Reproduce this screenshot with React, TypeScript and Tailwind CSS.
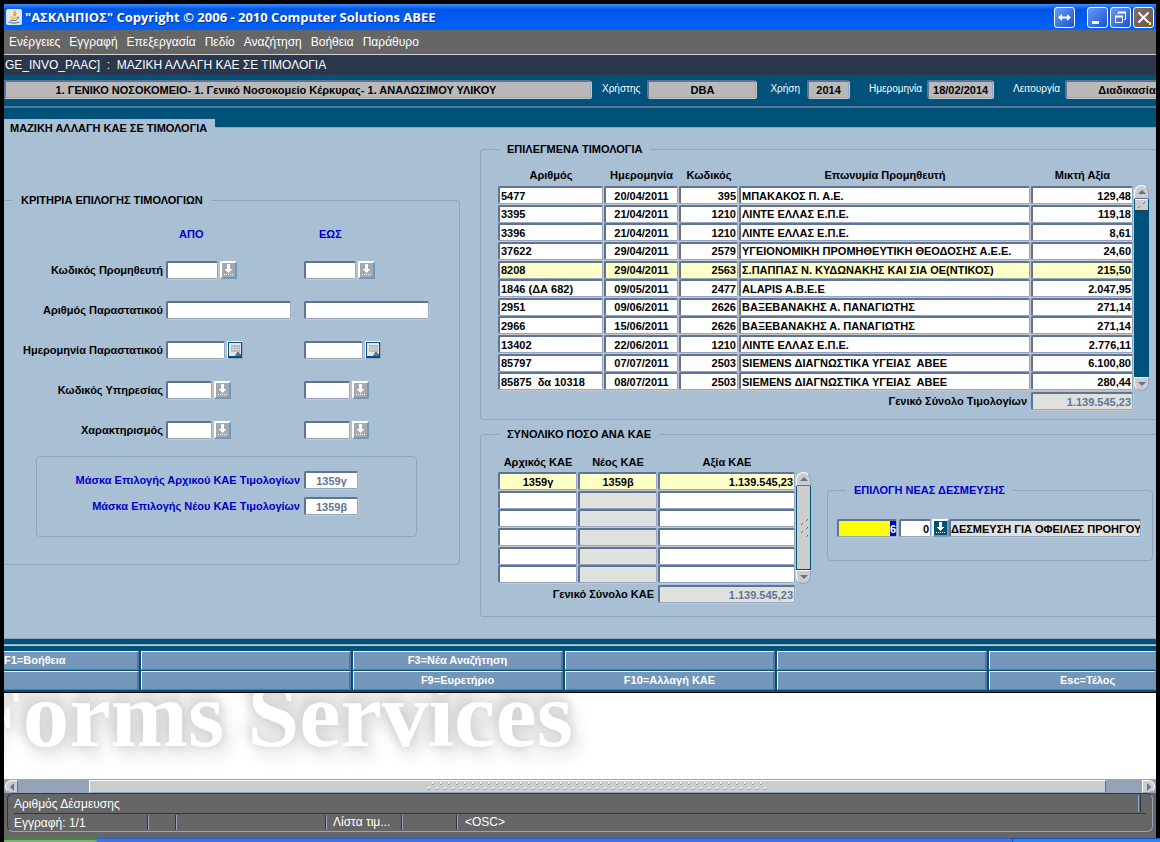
import { useState } from "react";
import type { ReactNode } from "react";

const bevel =
  "rounded-[2px] border-t-2 border-l-2 border-r border-b border-t-[#5f7396] border-l-[#5f7396] border-r-[#94a5bd] border-b-[#94a5bd] shadow-[1px_1px_0_#c8c8c8] outline-none";

type FieldProps = {
  label: string;
  value?: string;
  className?: string;
  readOnly?: boolean;
  id?: string;
};

function Field({ label, value = "", className = "", readOnly, id }: FieldProps) {
  const [text, setText] = useState(value);
  return (
    <input
      id={id}
      type="text"
      aria-label={id ? undefined : label}
      value={text}
      readOnly={readOnly}
      onChange={(e) => setText(e.target.value)}
      className={`block min-w-0 text-[11px] ${bevel} ${className}`}
    />
  );
}

function ListButton({ label, active = false }: { label: string; active?: boolean }) {
  return (
    <button
      type="button"
      aria-label={label}
      className={`h-[18px] w-[17px] shrink-0 border-2 border-t-white border-l-white border-r-[#7496b9] border-b-[#7496b9] ${
        active ? "bg-[#00527a]" : "bg-[#a3a9b0]"
      }`}
    >
      <svg viewBox="0 0 13 14" className="block h-[14px] w-[13px]" shapeRendering="crispEdges">
        <path d="M5 1h3v5h2v1h-1v1h-1v1h-1v1h-1v-1h-1v-1h-1v-1h-1v-1h2z" fill="#fff" />
        <path d="M2 11.5h9" stroke="#fff" strokeWidth="1" strokeDasharray="1 1" />
      </svg>
    </button>
  );
}

function CalendarButton({ label }: { label: string }) {
  return (
    <button
      type="button"
      aria-label={label}
      className="h-[18px] w-[16px] shrink-0 border border-t-white border-l-white border-r-[#94a5bd] border-b-[#94a5bd]"
    >
      <svg viewBox="0 0 14 16" className="block h-[16px] w-[14px]" shapeRendering="crispEdges">
        <path d="M0 0h14v16h-14z" fill="#00527a" />
        <path d="M1 1h12v13h-12z" fill="#e4e6e5" />
        <path d="M3 3h9v7h-9z" fill="#b9bcbc" />
        <path d="M4 5.500h7M4 7.500h7" stroke="#dcdedd" strokeDasharray="2 1" />
        <path d="M9 10h2v1h1v1h1v2h-6v-1h1v-2h1z" fill="#5f7396" />
      </svg>
    </button>
  );
}

function VerticalScroll({ full = false, className = "" }: { full?: boolean; className?: string }) {
  return (
    <div className={`flex w-[15px] flex-col ${className}`}>
      <button
        type="button"
        aria-label="Κύλιση επάνω"
        className="flex h-[14px] items-center justify-center rounded-t-full border border-b-[#5f7396] border-t-white border-l-white border-r-[#94a5bd] bg-[#cdcdcd]"
      >
        <svg viewBox="0 0 8 4" className="h-[4px] w-[8px]">
          <path d="M0 4L4 0L8 4z" fill="#5f7396" />
        </svg>
      </button>
      <div className="flex min-h-0 flex-1 flex-col bg-[#00527a]">
        <div
          className={`mx-px flex items-center justify-center border-b border-[#2a374d] bg-[#cdcdcd] ${
            full ? "flex-1" : "h-[12px] border-t border-t-white"
          }`}
        >
          <svg viewBox="0 0 8 20" className={full ? "h-[20px] w-[8px]" : "hidden"}>
            <path d="M6 3l2-2M1 7l2-2M6 11l2-2M1 15l2-2M6 19l2-2" stroke="#5f7396" />
          </svg>
          <svg viewBox="0 0 8 8" className={full ? "hidden" : "h-[8px] w-[8px]"}>
            <path d="M0 7l2-2M5 3l2-2" stroke="#5f7396" />
          </svg>
        </div>
      </div>
      <button
        type="button"
        aria-label="Κύλιση κάτω"
        className="flex h-[14px] items-center justify-center rounded-b-full border border-t-white border-b-[#94a5bd] border-l-white border-r-[#94a5bd] bg-[#cdcdcd]"
      >
        <svg viewBox="0 0 8 4" className="h-[4px] w-[8px]">
          <path d="M0 0L4 4L8 0z" fill="#5f7396" />
        </svg>
      </button>
    </div>
  );
}

function WindowButton({ label, tone, children }: { label: string; tone: string; children: ReactNode }) {
  return (
    <button
      type="button"
      aria-label={label}
      className={`flex size-[21px] items-center justify-center rounded-[3px] border border-white ${tone}`}
    >
      <svg viewBox="0 0 17 17" className="size-[17px]" fill="none" stroke="#fff">
        {children}
      </svg>
    </button>
  );
}

const menus = ["Ενέργειες", "Εγγραφή", "Επεξεργασία", "Πεδίο", "Αναζήτηση", "Βοήθεια", "Παράθυρο"];

const invoices = [
  ["5477", "20/04/2011", "395", "ΜΠΑΚΑΚΟΣ Π. Α.Ε.", "129,48"],
  ["3395", "21/04/2011", "1210", "ΛΙΝΤΕ ΕΛΛΑΣ Ε.Π.Ε.", "119,18"],
  ["3396", "21/04/2011", "1210", "ΛΙΝΤΕ ΕΛΛΑΣ Ε.Π.Ε.", "8,61"],
  ["37622", "29/04/2011", "2579", "ΥΓΕΙΟΝΟΜΙΚΗ ΠΡΟΜΗΘΕΥΤΙΚΗ ΘΕΟΔΟΣΗΣ Α.Ε.Ε.", "24,60"],
  ["8208", "29/04/2011", "2563", "Σ.ΠΑΠΠΑΣ Ν. ΚΥΔΩΝΑΚΗΣ ΚΑΙ ΣΙΑ ΟΕ(ΝΤΙΚΟΣ)", "215,50"],
  ["1846 (ΔΑ 682)", "09/05/2011", "2477", "ALAPIS A.B.E.E", "2.047,95"],
  ["2951", "09/06/2011", "2626", "ΒΑΞΕΒΑΝΑΚΗΣ Α. ΠΑΝΑΓΙΩΤΗΣ", "271,14"],
  ["2966", "15/06/2011", "2626", "ΒΑΞΕΒΑΝΑΚΗΣ Α. ΠΑΝΑΓΙΩΤΗΣ", "271,14"],
  ["13402", "22/06/2011", "1210", "ΛΙΝΤΕ ΕΛΛΑΣ Ε.Π.Ε.", "2.776,11"],
  ["85797", "07/07/2011", "2503", "SIEMENS ΔΙΑΓΝΩΣΤΙΚΑ ΥΓΕΙΑΣ  ΑΒΕΕ", "6.100,80"],
  ["85875  δα 10318", "08/07/2011", "2503", "SIEMENS ΔΙΑΓΝΩΣΤΙΚΑ ΥΓΕΙΑΣ  ΑΒΕΕ", "280,44"],
];
const invoiceHeads = ["Αριθμός", "Ημερομηνία", "Κωδικός", "Επωνυμία Προμηθευτή", "Μικτή Αξία"];
const invoiceAlign = ["text-left", "text-center", "text-right", "text-left", "text-right"];

const kaeRows = [
  ["1359γ", "1359β", "1.139.545,23"],
  ["", "", ""],
  ["", "", ""],
  ["", "", ""],
  ["", "", ""],
  ["", "", ""],
];
const kaeHeads = ["Αρχικός ΚΑΕ", "Νέος ΚΑΕ", "Αξία ΚΑΕ"];
const kaeAlign = ["text-center", "text-center", "text-right"];

const criteria = [
  { label: "Κωδικός Προμηθευτή", width: "w-[52px]", kind: "list" },
  { label: "Αριθμός Παραστατικού", width: "w-[125px]", kind: "none" },
  { label: "Ημερομηνία Παραστατικού", width: "w-[59px]", kind: "date" },
  { label: "Κωδικός Υπηρεσίας", width: "w-[46px]", kind: "list" },
  { label: "Χαρακτηρισμός", width: "w-[46px]", kind: "list" },
];

const functionKeys = [
  "F1=Βοήθεια",
  "",
  "F3=Νέα Αναζήτηση",
  "",
  "",
  "",
  "",
  "",
  "F9=Ευρετήριο",
  "F10=Αλλαγή ΚΑΕ",
  "",
  "Esc=Τέλος",
];

function TitleBar() {
  return (
    <header className="flex h-[26px] items-center bg-linear-to-b from-[#3c8cf8] via-[#0055e5] via-20% to-[#0064fc] pr-[2px] pl-[2px]">
      <svg viewBox="0 0 16 16" className="size-4 shrink-0">
        <rect width="16" height="16" rx="2" fill="#e4e8ec" />
        <path d="M8.500 1.500c2 1.500-2.500 2.500-.5 5.500M10.500 3.500c-2 1-1.500 2-1 3.500" stroke="#f0a010" strokeWidth="1.300" fill="none" />
        <path d="M4 7.500h7c0 2.500-1 3.500-3.500 3.500S4 10 4 7.500z" fill="#e8d070" />
        <path d="M11 8c2.500-.5 2 2-.5 2.200M4.500 11.500h6" stroke="#5b7c9c" fill="none" />
        <path d="M2.500 13c3 1.200 8 1.200 11 0" stroke="#5b7c9c" strokeWidth="1.300" fill="none" />
      </svg>
      <h1 className="ml-[3px] min-w-0 flex-1 truncate font-['Open_Sans','Noto_Sans',sans-serif] text-[13px] leading-5 font-bold text-white [text-shadow:1px_1px_0_#0a2f8c]">
        "ΑΣΚΛΗΠΙΟΣ" Copyright © 2006 - 2010 Computer Solutions ΑΒΕΕ
      </h1>
      <div className="flex gap-[2px]">
        <div className="mr-[10px] flex">
          <WindowButton label="Εναλλαγή πλάτους" tone="bg-linear-to-br from-[#6a9cf4] to-[#1c4fd0]">
            <path d="M4 8.500h9" strokeWidth="2" />
            <path d="M6 5v7L2 8.500zM11 5v7l4-3.500z" fill="#fff" stroke="none" />
          </WindowButton>
        </div>
        <WindowButton label="Ελαχιστοποίηση" tone="bg-linear-to-br from-[#6a9cf4] to-[#1c4fd0]">
          <path d="M3 13.500h7" strokeWidth="3" />
        </WindowButton>
        <WindowButton label="Επαναφορά" tone="bg-linear-to-br from-[#6a9cf4] to-[#1c4fd0]">
          <path d="M6 5V3.500h7.500v7H12" />
          <path d="M6 3.500h8" strokeWidth="2" />
          <path d="M3.500 7.500h7v6h-7z" />
          <path d="M3 7.500h8" strokeWidth="2" />
        </WindowButton>
        <WindowButton label="Κλείσιμο" tone="bg-linear-to-br from-[#8a6a60] to-[#6b5750]">
          <path d="M3.500 3.500l10 10M13.500 3.500l-10 10" strokeWidth="2" />
          <path d="M14 13h2v3h-2z" fill="#ff0" stroke="none" />
        </WindowButton>
      </div>
    </header>
  );
}

function HeaderField({ label, value, className }: { label: string; value: string; className: string }) {
  return (
    <label className="flex shrink-0 items-center text-[10px] text-white">
      {label}
      <Field
        label={label}
        value={value}
        readOnly
        className={`h-[18px] bg-[#b9b9b9] text-center font-bold text-black ${className}`}
      />
    </label>
  );
}

function Criteria() {
  return (
    <fieldset className="mt-[57px] mr-5 rounded-r-[4px] border border-l-0 border-[#94a5b8]">
      <legend className="ml-[9px] px-2">ΚΡΙΤΗΡΙΑ ΕΠΙΛΟΓΗΣ ΤΙΜΟΛΟΓΙΩΝ</legend>
      <div className="mt-5 grid grid-cols-[162px_138px_1fr] text-[#0000c8]">
        <span className="col-start-2 pl-[13px]">ΑΠΟ</span>
        <span className="pl-[15px]">ΕΩΣ</span>
      </div>
      <div className="mt-[19px] grid gap-[21px]">
        {criteria.map((c, i) => (
          <div key={c.label} className="grid h-[19px] grid-cols-[162px_138px_1fr] items-center">
            <label htmlFor={`criterion-${i}`} className="pr-[3px] text-right whitespace-nowrap">
              {c.label}
            </label>
            {["ΑΠΟ", "ΕΩΣ"].map((side) => (
              <div key={side} className="flex gap-[2px]">
                <Field
                  id={side === "ΑΠΟ" ? `criterion-${i}` : undefined}
                  label={`${c.label} ${side}`}
                  className={`h-[18px] bg-white px-[2px] ${c.width}`}
                />
                {c.kind === "list" && <ListButton label={`Λίστα ${c.label} ${side}`} />}
                {c.kind === "date" && <CalendarButton label={`Ημερολόγιο ${side}`} />}
              </div>
            ))}
          </div>
        ))}
      </div>
      <div className="mt-[17px] mr-[42px] mb-[27px] ml-8 grid gap-2 rounded-[4px] border border-[#94a5b8] pt-[14px] pr-[58px] pb-[21px] text-[#0000c8]">
        {[
          ["Μάσκα Επιλογής Αρχικού ΚΑΕ Τιμολογίων", "1359γ"],
          ["Μάσκα Επιλογής Νέου ΚΑΕ Τιμολογίων", "1359β"],
        ].map(([label, value]) => (
          <label key={label} className="flex items-center justify-end gap-[4px]">
            {label}
            <Field label={label} value={value} className="h-[18px] w-[54px] bg-white text-center text-[#5f7396]" />
          </label>
        ))}
      </div>
    </fieldset>
  );
}

function Invoices() {
  return (
    <fieldset className="mt-[14px] rounded-l-[4px] border border-r-0 border-[#94a5b8] pr-[7px] pb-[9px] pl-[17px]">
      <legend className="ml-px px-2">ΕΠΙΛΕΓΜΕΝΑ ΤΙΜΟΛΟΓΙΑ</legend>
      <div className="flex">
        <table className="h-[235px] min-w-0 flex-1 table-fixed border-collapse">
          <colgroup>
            <col className="w-[106px]" />
            <col className="w-[75px]" />
            <col className="w-[60px]" />
            <col />
            <col className="w-[103px]" />
          </colgroup>
          <thead>
            <tr className="h-[30px]">
              {invoiceHeads.map((h) => (
                <th key={h} scope="col" className="p-0 pb-1 text-center align-bottom whitespace-nowrap">
                  {h}
                </th>
              ))}
            </tr>
          </thead>
          <tbody>
            {invoices.map((row, r) => (
              <tr key={r}>
                {row.map((cell, c) => (
                  <td key={c} className="p-0 pr-px align-top">
                    <Field
                      label={`${invoiceHeads[c]} ${r + 1}`}
                      value={cell}
                      className={`h-[18px] w-full px-px ${r === 4 ? "bg-[#ffffc8]" : "bg-white"} ${invoiceAlign[c]}`}
                    />
                  </td>
                ))}
              </tr>
            ))}
          </tbody>
        </table>
        <VerticalScroll className="mt-[29px]" />
      </div>
      <label className="mt-px flex items-center justify-end gap-1 pr-[16px]">
        Γενικό Σύνολο Τιμολογίων
        <Field
          label="Γενικό Σύνολο Τιμολογίων"
          value="1.139.545,23"
          readOnly
          className="h-[18px] w-[102px] bg-[#dfe1df] px-px text-right text-[#5f7396]"
        />
      </label>
    </fieldset>
  );
}

function KaeTotals() {
  return (
    <fieldset className="mt-[7px] rounded-l-[4px] border border-r-0 border-[#94a5b8] pr-[3px] pb-[13px] pl-[17px]">
      <legend className="ml-px px-2">ΣΥΝΟΛΙΚΟ ΠΟΣΟ ΑΝΑ ΚΑΕ</legend>
      <div className="flex items-start">
        <div className="shrink-0">
          <div className="flex">
            <table className="h-[143px] w-[298px] table-fixed border-collapse">
              <colgroup>
                <col className="w-[80px]" />
                <col className="w-[80px]" />
                <col />
              </colgroup>
              <thead>
                <tr className="h-[31px]">
                  {kaeHeads.map((h) => (
                    <th key={h} scope="col" className="p-0 pb-[3px] text-center align-bottom whitespace-nowrap">
                      {h}
                    </th>
                  ))}
                </tr>
              </thead>
              <tbody>
                {kaeRows.map((row, r) => (
                  <tr key={r}>
                    {row.map((cell, c) => (
                      <td key={c} className="p-0 pr-px align-top">
                        <Field
                          label={`${kaeHeads[c]} ${r + 1}`}
                          value={cell}
                          className={`h-[18px] w-full px-px ${
                            r === 0 ? "bg-[#ffffc8]" : c === 1 ? "bg-[#dfe1df]" : "bg-white"
                          } ${kaeAlign[c]}`}
                        />
                      </td>
                    ))}
                  </tr>
                ))}
              </tbody>
            </table>
            <VerticalScroll full className="mt-[31px]" />
          </div>
          <label className="mt-px flex items-center justify-end gap-1 pr-[16px]">
            Γενικό Σύνολο ΚΑΕ
            <Field
              label="Γενικό Σύνολο ΚΑΕ"
              value="1.139.545,23"
              readOnly
              className="h-[18px] w-[137px] bg-[#dfe1df] px-px text-right text-[#5f7396]"
            />
          </label>
        </div>
        <fieldset className="mt-[42px] ml-4 min-w-0 flex-1 rounded-[4px] border border-[#94a5b8] pr-[11px] pb-[23px] pl-[9px]">
          <legend className="ml-[9px] px-2 text-[#0000c8]">ΕΠΙΛΟΓΗ ΝΕΑΣ ΔΕΣΜΕΥΣΗΣ</legend>
          <div className="mt-[22px] flex">
            <div className={`flex h-[18px] w-[60px] shrink-0 justify-end bg-[#ffff00] ${bevel}`}>
              <input
                type="text"
                aria-label="Αριθμός Δέσμευσης"
                defaultValue="6"
                className="w-[6px] bg-[#0000c8] text-right text-white outline-none"
              />
            </div>
            <Field
              label="Υποαριθμός Δέσμευσης"
              value="0"
              className="mr-px ml-[2px] h-[18px] w-[32px] shrink-0 bg-white px-px text-right"
            />
            <ListButton label="Λίστα δεσμεύσεων" active />
            <Field
              label="Περιγραφή Δέσμευσης"
              value="ΔΕΣΜΕΥΣΗ ΓΙΑ ΟΦΕΙΛΕΣ ΠΡΟΗΓΟΥΜΕΝΩΝ"
              readOnly
              className="h-[18px] flex-1 bg-[#dfe1df]"
            />
          </div>
        </fieldset>
      </div>
    </fieldset>
  );
}

function Arrow({ d }: { d: string }) {
  return (
    <svg viewBox="0 0 4 8" className="h-[8px] w-[4px]">
      <path d={d} fill="#5f7396" />
    </svg>
  );
}

function HorizontalScroll() {
  return (
    <div className="flex h-[14px] border-t border-[#94a5bd] bg-[#94a3b8] px-px">
      <button
        type="button"
        aria-label="Κύλιση αριστερά"
        className="flex w-[13px] items-center justify-center rounded-l-full border border-t-white border-l-white border-r-[#5f7396] border-b-[#94a5bd] bg-[#cdcdcd]"
      >
        <Arrow d="M4 0L0 4L4 8z" />
      </button>
      <div className="mr-[36px] ml-[71px] flex flex-1 items-center justify-center border border-t-white border-l-white border-r-[#5f7396] border-b-[#94a5bd] bg-[#cdcdcd]">
        <svg className="h-[9px] w-[340px]" shapeRendering="crispEdges">
          <defs>
            <pattern id="grip" width="8" height="9" patternUnits="userSpaceOnUse">
              <path d="M4 0h2v2h-2zM0 5h2v2h-2z" fill="#fff" />
              <path d="M5 1h1v2h-2v-1h1zM1 6h1v2h-2v-1h1z" fill="#94a5bd" />
            </pattern>
          </defs>
          <rect width="340" height="9" fill="url(#grip)" />
        </svg>
      </div>
      <button
        type="button"
        aria-label="Κύλιση δεξιά"
        className="flex w-[13px] items-center justify-center rounded-r-full border border-t-white border-l-white border-r-white border-b-[#94a5bd] bg-[#cdcdcd]"
      >
        <Arrow d="M0 0L4 4L0 8z" />
      </button>
    </div>
  );
}

export default function App() {
  const sep = "border-l border-[#2a374d] shadow-[inset_1px_0_0_#94a5bd]";
  return (
    <div className="flex min-h-screen flex-col overflow-hidden bg-black px-1 pt-1 font-['Liberation_Sans',Arial,sans-serif] text-[11px] leading-[14px] text-black">
      <TitleBar />
      <nav className="flex h-[25px] items-center gap-[9px] border-b border-[#d0d0d0] bg-[#666] pl-[5px] text-[12px] text-white">
        {menus.map((m) => (
          <button key={m} type="button">
            {m}
          </button>
        ))}
      </nav>
      <div className="flex h-[20px] items-center bg-[#2a374d] pl-px text-[12px] whitespace-pre text-white">
        {"GE_INVO_PAAC]  :  ΜΑΖΙΚΗ ΑΛΛΑΓΗ ΚΑΕ ΣΕ ΤΙΜΟΛΟΓΙΑ"}
      </div>

      <div className="flex h-[31px] overflow-hidden bg-[#00527a] pt-[5px] pb-[7px]">
        <Field
          label="Μονάδα"
          value="1. ΓΕΝΙΚΟ ΝΟΣΟΚΟΜΕΙΟ- 1. Γενικό Νοσοκομείο Κέρκυρας- 1. ΑΝΑΛΩΣΙΜΟΥ ΥΛΙΚΟΥ"
          readOnly
          className="mr-[11px] h-[18px] flex-1 rounded-l-none border-l-0 bg-[#b9b9b9] pr-[44px] text-center font-bold"
        />
        <div className="flex items-start gap-5">
          <div className="flex gap-[14px]">
            <HeaderField label="Χρήστης" value="DBA" className="ml-[7px] w-[109px]" />
            <HeaderField label="Χρήση" value="2014" className="ml-[7px] w-[42px]" />
          </div>
          <HeaderField label="Ημερομηνία" value="18/02/2014" className="ml-[5px] w-[66px]" />
          <HeaderField
            label="Λειτουργία"
            value="Διαδικασία"
            className="ml-[5px] w-[91px] rounded-r-none border-r-0 pl-[31px]"
          />
        </div>
      </div>
      <div className="flex h-[21px] items-end border-t-2 border-[#5f7396] bg-[#00527a]">
        <div role="tab" aria-selected="true" className="h-[8px] w-[211px] bg-[#a9bfd4]" />
      </div>

      <main className="grid grid-cols-[476px_minmax(0,1fr)] border-t border-b border-[#94a5b8] bg-[#a9bfd4] pb-[21px] font-bold">
        <section>
          <h2 className="-mt-[8px] h-[16px] w-[211px] bg-[#a9bfd4] pl-[6px] leading-[16px] whitespace-nowrap">
            ΜΑΖΙΚΗ ΑΛΛΑΓΗ ΚΑΕ ΣΕ ΤΙΜΟΛΟΓΙΑ
          </h2>
          <Criteria />
        </section>
        <section>
          <Invoices />
          <KaeTotals />
        </section>
      </main>

      <footer className="border-b border-black bg-[#00527a]">
        <div className="mt-[5px] h-[2px] border-t border-[#94a5b8] bg-[#d0d0d0]" />
        <div className="mt-[5px] mb-[2px] grid grid-cols-[135px_repeat(4,minmax(0,1fr))_167px] gap-x-[2px] gap-y-px">
          {functionKeys.map((k, i) => (
            <button
              key={i}
              type="button"
              aria-label={k || "Κενό"}
              className={`h-[19px] overflow-hidden border border-r-2 bg-[#7496b9] pb-[2px] font-bold whitespace-nowrap text-white ${
                i % 6 === 0
                  ? "border-l-0 border-t-white border-r-[#5f7396] border-b-[#5f7396] text-left"
                  : i % 6 === 5
                    ? "border-t-white border-r-[#7496b9] border-b-[#5f7396] border-l-white pl-[70px] text-left"
                    : "border-t-white border-r-[#5f7396] border-b-[#5f7396] border-l-white text-center"
              }`}
            >
              {k}
            </button>
          ))}
        </div>
      </footer>

      <div className="min-h-[86px] flex-1 overflow-hidden bg-white">
        <p className="-ml-[38px] h-[44px] font-['Liberation_Serif',serif] text-[93px] leading-[44px] font-bold whitespace-nowrap text-white [text-shadow:0_0_8px_#d0d0d0,6px_8px_18px_#d4d4d4,-6px_-8px_14px_#d8d8d8,0_-20px_12px_#e4e4e4]">
          Forms Services
        </p>
      </div>

      <HorizontalScroll />

      <div className="bg-[#666] px-[3px] pb-[6px] text-[12px] text-white">
        <div className="rounded-[6px] border border-t-[#2a374d] border-l-[#2a374d] border-r-[#94a5bd] border-b-[#94a5bd] px-[6px]">
          <div className="flex h-[20px] items-center justify-between border-b border-[#2a374d] pr-[5px]">
            <span>Αριθμός Δέσμευσης</span>
            <span className="h-[17px] w-[3px] border-l border-r border-l-[#94a5bd] border-r-[#2a374d]" />
          </div>
          <div className="flex h-[17px] items-center">
            <span className="w-[133px]">Εγγραφή: 1/1</span>
            <span className={`h-[15px] w-[28px] ${sep}`} />
            <span className={`h-[15px] w-[150px] ${sep}`} />
            <span className={`h-[15px] w-[76px] pl-[7px] ${sep}`}>Λίστα τιμ...</span>
            <span className={`h-[15px] w-[55px] ${sep}`} />
            <span className={`h-[15px] pl-[8px] ${sep}`}>{"<OSC>"}</span>
          </div>
        </div>
      </div>
      <div className="-mr-1 flex h-1 bg-[#3a76e6]">
        <div className="w-[93px] rounded-tr-[4px] border-t-2 border-[#4a8043] bg-[#7fae7c]" />
        <div className="flex-1 border-t border-[#2560d0]" />
        <div className="w-[148px] border-t border-l border-[#1450c0] bg-[#2088fa]" />
      </div>
    </div>
  );
}
